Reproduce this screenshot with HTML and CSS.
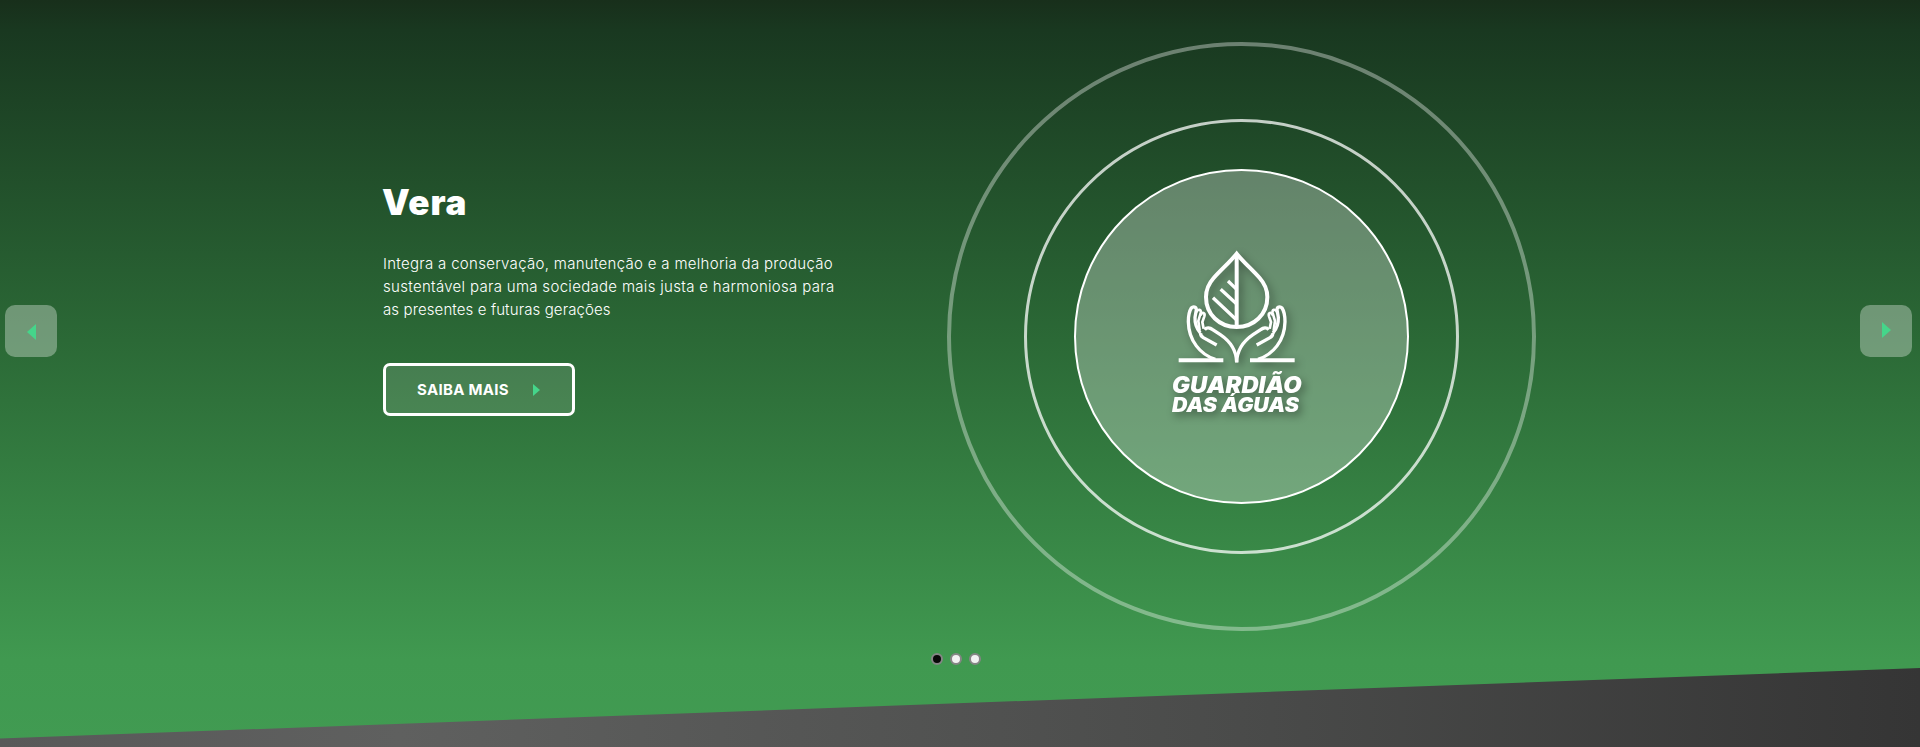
FILE: index.html
```
<!DOCTYPE html>
<html lang="pt-BR">
<head>
<meta charset="utf-8">
<title>Vera</title>
<link rel="stylesheet" href="styles.css">
</head>
<body>
<main class="hero">
  <button class="nav nav-prev" aria-label="Anterior"><svg width="9" height="16" viewBox="0 0 9 16"><path d="M9 0v16L0 8z"/></svg></button>
  <section class="slide">
    <div class="copy">
      <h1 class="title"><span class="title-text">Vera</span></h1>
      <p class="desc"><span class="l1">Integra a conservação, manutenção e a melhoria da produção</span><br><span class="l2">sustentável para uma sociedade mais justa e harmoniosa para</span><br><span class="l3">as presentes e futuras gerações</span></p>
      <a class="cta"><span class="cta-label">SAIBA MAIS</span><svg width="7" height="12" viewBox="0 0 7 12"><path d="M0 0v12l7-6z"/></svg></a>
    </div>
    <div class="ring ring-outer">
      <div class="ring ring-middle">
        <div class="ring ring-inner">
          <svg class="logo" width="180" height="200" viewBox="0 0 540 600">
            <g fill="none" stroke="#fff" stroke-width="12">
              <path d="M260 71C238 98 214 118 191 144C175 162 168 180 168 201C168 253 208 291 260 291C312 291 352 253 352 201C352 180 345 162 329 144C306 118 282 98 260 71Z"/>
              <path d="M260 74V292"/>
              <path d="M234 153L260 178M212 178L260 222M189 203L260 270" stroke-width="10"/>
              <g id="hand">
                <path d="M86 391H220" stroke-width="12"/>
                <path d="M196 388C151 374 116 332 115 275C115 257 118 243 124 234C130 228 139 231 139 239L135 262C134 281 141 297 151 309" stroke-width="10"/>
                <path d="M138 247C145 235 154 238 152 249L145 273L149 302" stroke-width="8"/>
                <path d="M151 256C157 244 166 249 163 259L157 276L161 296" stroke-width="8"/>
                <path d="M152 309C151 315 154 319 160 323L200 345M164 299C170 291 180 293 188 299L211 314C239 333 259 357 260 397" stroke-width="10"/>
              </g>
              <use href="#hand" transform="translate(520 0) scale(-1 1)"/>
            </g>
            <g class="logo-text">
              <text x="66" y="488" font-size="67" textLength="389" lengthAdjust="spacingAndGlyphs">GUARDIÃO</text>
              <text x="66" y="547" font-size="59" textLength="381" lengthAdjust="spacingAndGlyphs">DAS ÁGUAS</text>
            </g>
          </svg>
        </div>
      </div>
    </div>
  </section>
  <button class="nav nav-next" aria-label="Próximo"><svg width="9" height="16" viewBox="0 0 9 16"><path d="M0 0v16l9-8z"/></svg></button>
  <div class="dots"><i class="dot active"></i><i class="dot"></i><i class="dot"></i></div>
  <div class="slope"></div>
</main>
</body>
</html>
```
FILE: styles.css
```
* { box-sizing: border-box; }
body { margin: 0; }
.hero {
  position: relative;
  height: 747px;
  overflow: hidden;
  display: flex;
  justify-content: space-between;
  align-items: flex-start;
  padding: 0 8px 0 5px;
  background: linear-gradient(#182f1b 0, #193820 30px, #2b6936 340px, #409950 660px, #419b52 747px);
  color: #fff;
  font-family: Inter, "Open Sans", sans-serif;
}
.nav {
  width: 52px;
  height: 52px;
  margin-top: 305px;
  padding: 0;
  border: 0;
  border-radius: 10px;
  background: rgba(255, 255, 255, .33);
  display: flex;
  align-items: center;
  justify-content: center;
  fill: #45d58a;
}
.nav-prev { padding: 2px 0 0 1px; }
.nav-next { padding-bottom: 2px; }
.slide {
  flex: 1;
  display: flex;
  align-items: flex-start;
  padding: 42px 0 0 326px;
}
.copy { width: 564px; padding-top: 135px; }
.title {
  margin: 0;
  height: 50px;
  font-size: 35px;
  line-height: 50px;
  font-weight: 900;
  letter-spacing: .9px;
}
.title-text { margin-left: -1px; }
.desc {
  margin: 25px 0 0;
  font-size: 15px;
  line-height: 23px;
  font-weight: 300;
  white-space: nowrap;
}
.l1 { letter-spacing: .3px; }
.l2 { letter-spacing: .31px; }
.l3 { letter-spacing: .11px; }
.cta {
  display: flex;
  align-items: center;
  width: 192px;
  height: 53px;
  margin: 42px 0 0;
  padding-left: 31px;
  border: 3px solid #fff;
  border-radius: 7px;
  background: rgba(255, 255, 255, .12);
  font-size: 15px;
  font-weight: 700;
  letter-spacing: .3px;
  fill: #45d58a;
}
.cta-label { width: 116px; white-space: nowrap; }
.ring {
  display: flex;
  align-items: center;
  justify-content: center;
  flex: none;
  border-radius: 50%;
}
.ring-outer { width: 589px; height: 589px; border: 4px solid rgba(255, 255, 255, .36); }
.ring-middle { width: 435px; height: 435px; border: 3px solid rgba(255, 255, 255, .74); }
.ring-inner { width: 335px; height: 335px; border: 2px solid #fff; background: rgba(255, 255, 255, .3); }
.logo { margin: -13px 0 0 -4px; overflow: visible; filter: drop-shadow(3px 4px 4px rgba(0, 0, 0, .4)); }
.logo-text { fill: #fff; font-family: Inter, "Open Sans", sans-serif; font-weight: 900; font-style: italic; }
.dots {
  position: absolute;
  left: 931px;
  top: 652.5px;
  display: flex;
  gap: 7px;
}
.dot { width: 12px; height: 12px; border: 2px solid #858585; border-radius: 50%; background: #f2f2f2; }
.dot.active { background: #080808; }
.slope {
  position: absolute;
  left: 0;
  right: 0;
  bottom: 0;
  height: 79px;
  background: linear-gradient(90deg, #585959 0, #5f605f 400px, #4a4b4a 1240px, #353535 1920px);
  clip-path: polygon(0 70.5px, 100% 0, 100% 100%, 0 100%);
}
```
